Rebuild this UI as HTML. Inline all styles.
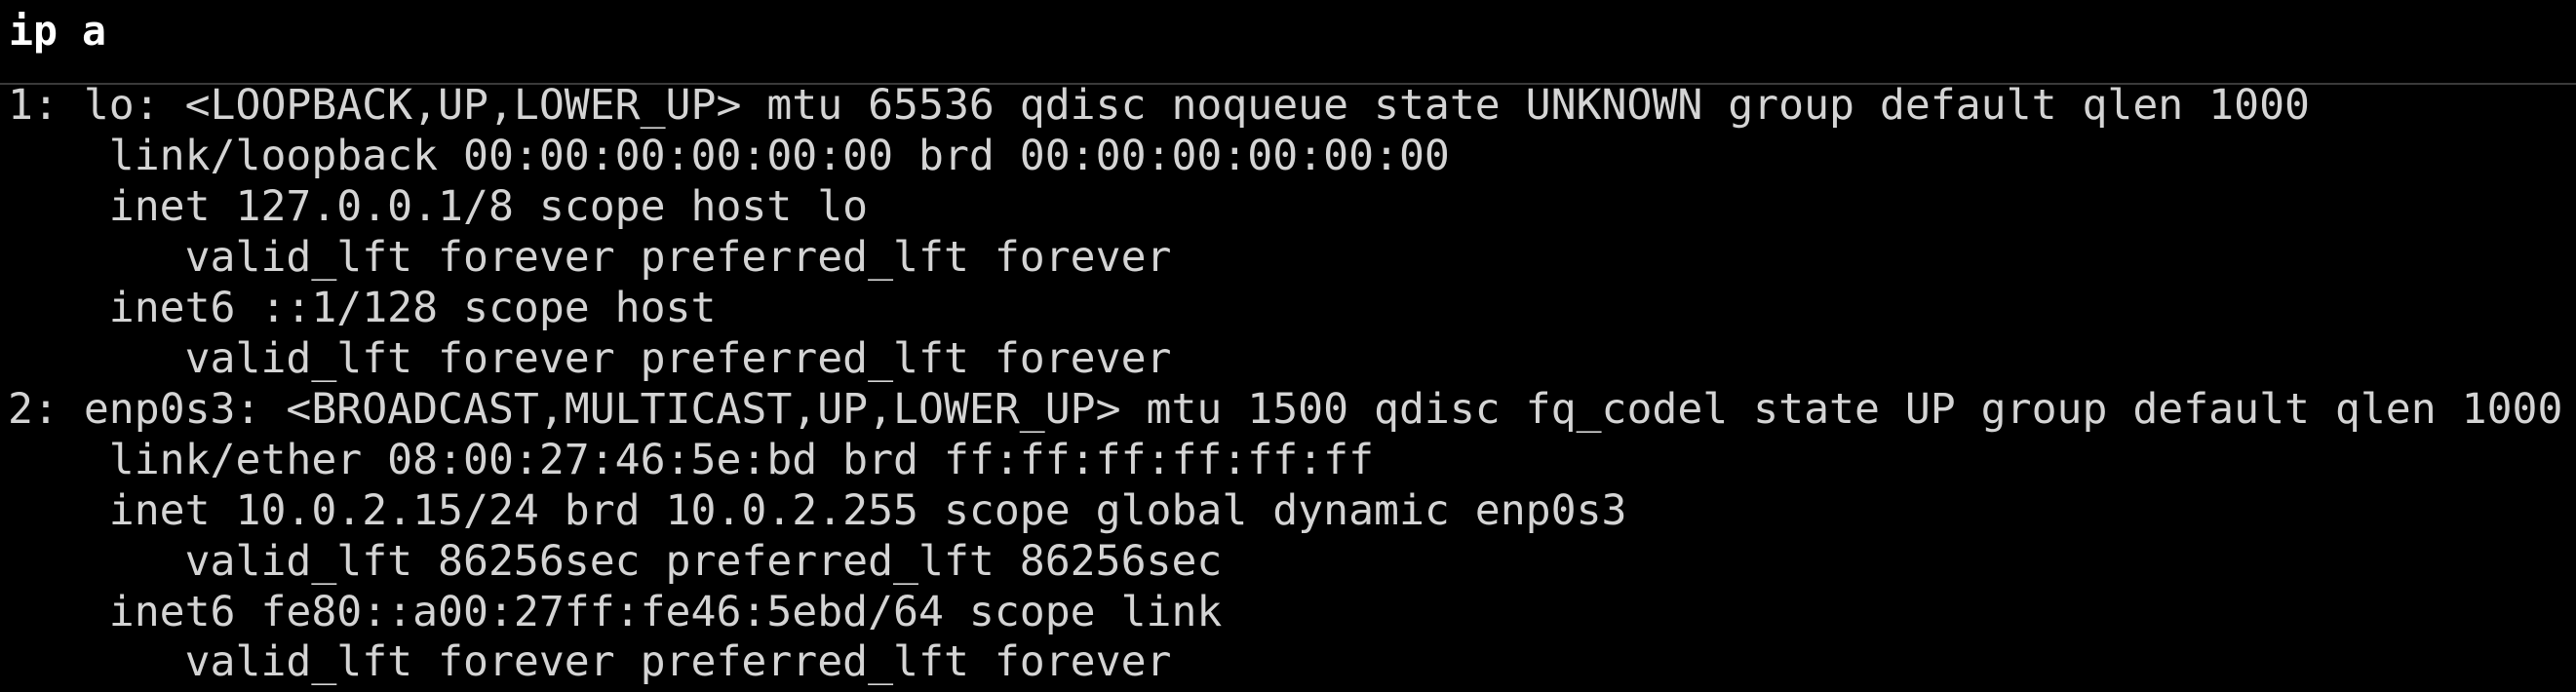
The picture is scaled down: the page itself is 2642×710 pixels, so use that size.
<!DOCTYPE html>
<html><head><meta charset="utf-8"><style>
html,body{margin:0;padding:0;background:#000;width:2642px;height:710px;overflow:hidden}
body{position:relative;font-family:"DejaVu Sans Mono","Liberation Mono",monospace}
#cmd{position:absolute;left:9px;top:6px;font-size:41.5px;line-height:52px;font-weight:bold;color:#fff;white-space:pre}
#sep{position:absolute;left:0;top:85px;width:2642px;height:2px;background:#3a3a3a}
#out{position:absolute;left:8px;top:83px;font-size:43.1px;line-height:51.95px;color:#d4d4d4;white-space:pre;margin:0;font-family:inherit}
</style></head><body>
<div id="cmd">ip a</div>
<div id="sep"></div>
<pre id="out">1: lo: &lt;LOOPBACK,UP,LOWER_UP&gt; mtu 65536 qdisc noqueue state UNKNOWN group default qlen 1000
    link/loopback 00:00:00:00:00:00 brd 00:00:00:00:00:00
    inet 127.0.0.1/8 scope host lo
       valid_lft forever preferred_lft forever
    inet6 ::1/128 scope host
       valid_lft forever preferred_lft forever
2: enp0s3: &lt;BROADCAST,MULTICAST,UP,LOWER_UP&gt; mtu 1500 qdisc fq_codel state UP group default qlen 1000
    link/ether 08:00:27:46:5e:bd brd ff:ff:ff:ff:ff:ff
    inet 10.0.2.15/24 brd 10.0.2.255 scope global dynamic enp0s3
       valid_lft 86256sec preferred_lft 86256sec
    inet6 fe80::a00:27ff:fe46:5ebd/64 scope link
       valid_lft forever preferred_lft forever</pre>
</body></html>
